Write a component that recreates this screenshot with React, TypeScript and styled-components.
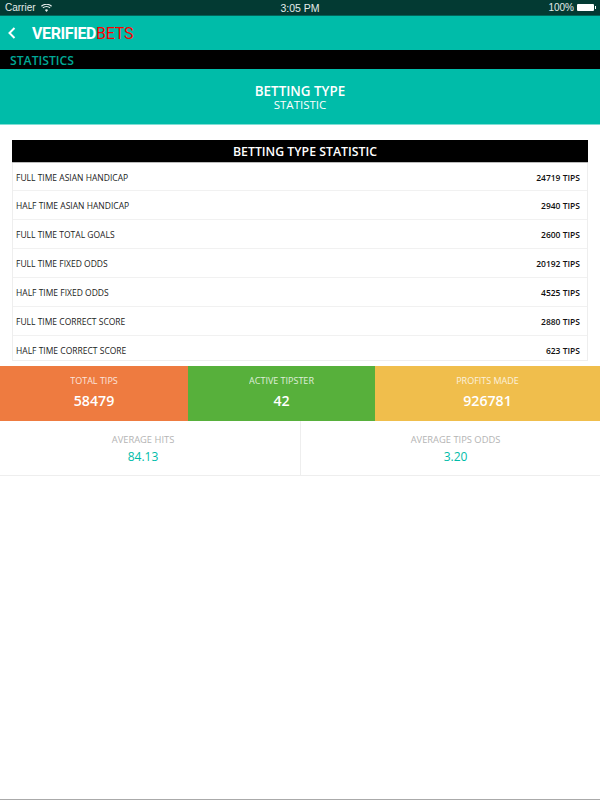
import styled, { createGlobalStyle } from 'styled-components';

const GlobalStyle = createGlobalStyle`
  html, body {
    margin: 0;
    padding: 0;
    background: #fff;
    font-family: 'Open Sans', sans-serif;
  }
  * {
    box-sizing: border-box;
  }
`;

const Page = styled.div`
  width: 600px;
  height: 800px;
  display: flex;
  flex-direction: column;
  overflow: hidden;
  border-bottom: 1px solid #aaa;
`;

const StatusBar = styled.div`
  height: 16px;
  padding: 0 5px;
  display: grid;
  grid-template-columns: 1fr auto 1fr;
  align-items: center;
  background: #033a33;
  border-bottom: 1px solid #02655a;
  color: #e4ecea;
  font-family: 'Liberation Sans', sans-serif;
  font-size: 10px;
`;

const StatusLeft = styled.div`
  display: flex;
  align-items: center;
  gap: 5px;
`;

const StatusTime = styled.span`
  font-size: 10.5px;
`;

const StatusRight = styled.div`
  display: flex;
  align-items: center;
  justify-content: flex-end;
  gap: 3px;
`;

const Battery = styled.div`
  position: relative;
  width: 17px;
  height: 7px;
  margin-right: 1px;
  background: #fff;
  border-radius: 1px;

  &::after {
    content: '';
    position: absolute;
    top: 2px;
    right: -2px;
    width: 1px;
    height: 3px;
    background: #fff;
  }
`;

const NavBar = styled.div`
  height: 34px;
  padding-left: 8px;
  display: flex;
  align-items: center;
  gap: 16px;
  background: #00bca9;
`;

const Logo = styled.div`
  font-family: Roboto, sans-serif;
  font-size: 16px;
  font-weight: 700;
  letter-spacing: -0.4px;
  color: #fff;

  span {
    font-weight: 400;
    letter-spacing: -0.2px;
    color: #ff0000;
  }
`;

const SectionBar = styled.div`
  height: 19px;
  padding: 1px 0 0 10px;
  display: flex;
  align-items: center;
  background: #000;
  color: #00a896;
  font-size: 12.2px;
  font-weight: 600;
`;

const Hero = styled.div`
  height: 56px;
  padding-top: 15px;
  background: #00bca9;
  border-bottom: 1px solid #7fdfd4;
  color: #fff;
  text-align: center;
`;

const HeroTitle = styled.div`
  font-size: 13.4px;
  font-weight: 600;
  line-height: 14px;
`;

const HeroSub = styled.div`
  font-size: 11.5px;
  line-height: 13px;
`;

const Table = styled.div`
  margin: 15px 12px 0;
  border: 1px solid #eee;
  border-top: 0;
`;

const TableHead = styled.div`
  height: 23px;
  margin: 0 -1px;
  padding-left: 10px;
  display: flex;
  align-items: center;
  justify-content: center;
  background: #000;
  border-bottom: 1px solid #bbb;
  color: #fff;
  font-size: 12.3px;
  font-weight: 600;
`;

const Row = styled.div<{ $h: number }>`
  height: ${p => p.$h}px;
  padding: 0 7px 0 3px;
  display: flex;
  align-items: center;
  justify-content: space-between;
  border-bottom: 1px solid #f1f1f1;
  font-size: 8.5px;
  color: #222;

  ${TableHead} + & {
    padding-top: 2px;
  }

  &:last-child {
    border-bottom: 0;
    padding-top: 4px;
  }
`;

const Tips = styled.span`
  font-weight: 600;
  color: #111;
`;

const Tiles = styled.div`
  margin-top: 5px;
  display: grid;
  grid-template-columns: 188px 187px 225px;
`;

const Tile = styled.div<{ $bg: string }>`
  height: 55px;
  padding-top: 9px;
  background: ${p => p.$bg};
  color: #fff;
  text-align: center;
`;

const TileLabel = styled.div`
  font-size: 9px;
  line-height: 12px;
  opacity: 0.8;
`;

const TileValue = styled.div`
  margin-top: 4px;
  font-size: 14.2px;
  font-weight: 600;
  line-height: 20px;
`;

const Averages = styled.div`
  display: grid;
  grid-template-columns: 300px 300px;
  height: 55px;
  border-bottom: 1px solid #eee;
`;

const Average = styled.div<{ $shift: string }>`
  padding: 13px 0 0;
  padding-${p => p.$shift}: ${p => (p.$shift === 'left' ? 10 : 14)}px;
  text-align: center;

  & + & {
    border-left: 1px solid #eee;
  }
`;

const AverageLabel = styled.div`
  font-size: 9.35px;
  line-height: 12px;
  color: #b4b4b4;
`;

const AverageValue = styled.div`
  margin-top: 1px;
  font-size: 12px;
  line-height: 20px;
  color: #00bca9;
`;

const rows = [
  { name: 'FULL TIME ASIAN HANDICAP', tips: 24719, h: 28 },
  { name: 'HALF TIME ASIAN HANDICAP', tips: 2940, h: 29 },
  { name: 'FULL TIME TOTAL GOALS', tips: 2600, h: 29 },
  { name: 'FULL TIME FIXED ODDS', tips: 20192, h: 29 },
  { name: 'HALF TIME FIXED ODDS', tips: 4525, h: 29 },
  { name: 'FULL TIME CORRECT SCORE', tips: 2880, h: 29 },
  { name: 'HALF TIME CORRECT SCORE', tips: 623, h: 24 },
];

function App() {
  return (
    <Page>
      <GlobalStyle />
      <StatusBar>
        <StatusLeft>
          Carrier
          <svg width='11' height='8' viewBox='0 0 11 8'>
            <path d='M5.5 8 3.9 6a2.5 2.5 0 0 1 3.2 0Z' fill='#e4ecea' />
            <path d='M1.9 3.9a5.4 5.4 0 0 1 7.2 0M.4 2.2a7.7 7.7 0 0 1 10.2 0' fill='none' stroke='#e4ecea' strokeWidth='1.2' />
          </svg>
        </StatusLeft>
        <StatusTime>3:05 PM</StatusTime>
        <StatusRight>
          100%
          <Battery />
        </StatusRight>
      </StatusBar>

      <NavBar>
        <svg width='8' height='12' viewBox='0 0 8 12'>
          <path d='M6.5 1 1.5 6l5 5' fill='none' stroke='#fff' strokeWidth='2' />
        </svg>
        <Logo>VERIFIED<span>BETS</span></Logo>
      </NavBar>

      <SectionBar>STATISTICS</SectionBar>

      <Hero>
        <HeroTitle>BETTING TYPE</HeroTitle>
        <HeroSub>STATISTIC</HeroSub>
      </Hero>

      <Table>
        <TableHead>BETTING TYPE STATISTIC</TableHead>
        {rows.map(row => (
          <Row key={row.name} $h={row.h}>
            <span>{row.name}</span>
            <Tips>{row.tips} TIPS</Tips>
          </Row>
        ))}
      </Table>

      <Tiles>
        <Tile $bg='#ee7b40'>
          <TileLabel>TOTAL TIPS</TileLabel>
          <TileValue>58479</TileValue>
        </Tile>
        <Tile $bg='#57b03b'>
          <TileLabel>ACTIVE TIPSTER</TileLabel>
          <TileValue>42</TileValue>
        </Tile>
        <Tile $bg='#f0be4c'>
          <TileLabel>PROFITS MADE</TileLabel>
          <TileValue>926781</TileValue>
        </Tile>
      </Tiles>

      <Averages>
        <Average $shift='right'>
          <AverageLabel>AVERAGE HITS</AverageLabel>
          <AverageValue>84.13</AverageValue>
        </Average>
        <Average $shift='left'>
          <AverageLabel>AVERAGE TIPS ODDS</AverageLabel>
          <AverageValue>3.20</AverageValue>
        </Average>
      </Averages>
    </Page>
  );
}

export default App;
